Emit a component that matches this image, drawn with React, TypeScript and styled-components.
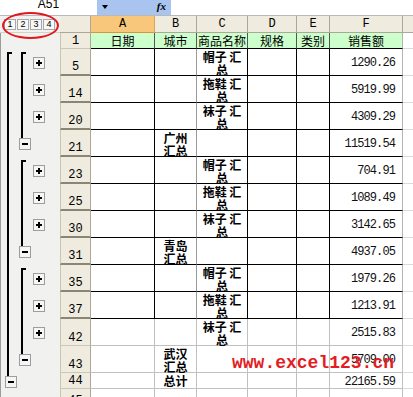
import React from 'react';
import styled, {createGlobalStyle, css} from 'styled-components';

const GlobalStyle = createGlobalStyle`
  html, body {
    margin: 0;
    padding: 0;
    background: #fff;
    overflow: hidden;
  }
  body {
    font-family: "Noto Sans CJK SC", "Liberation Sans", sans-serif;
  }
`

const HEAD_BG = '#efebde'
const HEAD_LINE = '#aca899'
const PANE_BG = '#f1f1ef'

const COLS = [
    {key: 'A', w: 64},
    {key: 'B', w: 42},
    {key: 'C', w: 51},
    {key: 'D', w: 49},
    {key: 'E', w: 33},
    {key: 'F', w: 73},
]

// colour of the right border of each column inside the bordered range
const RIGHT_LINES = ['#000', '#9a9a9a', '#000', '#000', '#000', '#b4b4b4']

const Frame = styled.div`
  position: relative;
  width: 413px;
  height: 397px;
  overflow: hidden;
  background: #fff;
`

const TopBar = styled.div`
  display: flex;
  height: 16px;
  box-sizing: border-box;
  border-bottom: 1px solid #b9b9b9;
`

const NameBox = styled.div`
  width: 97px;
  height: 15px;
  overflow: hidden;
  text-align: center;
  font-family: "Liberation Sans", Arial, sans-serif;
  font-size: 12px;
  line-height: 12px;
  color: #000;

  span {
    display: block;
    margin-top: -2px;
  }
`

const BlueArea = styled.div`
  width: 74px;
  height: 15px;
  background: #a9c4ee;
  display: flex;
  align-items: center;
  justify-content: space-between;
  padding: 0 5px 0 5px;
  box-sizing: border-box;
`

const DropArrow = styled.div`
  width: 0;
  height: 0;
  border-left: 3px solid transparent;
  border-right: 3px solid transparent;
  border-top: 4px solid #000;
  margin-top: -2px;
`

const Fx = styled.div`
  font-family: "Liberation Serif", serif;
  font-style: italic;
  font-weight: bold;
  font-size: 11px;
  line-height: 11px;
  color: #000;
  margin-top: -3px;
`

const Row = styled.div<{ $h: number }>`
  display: flex;
  height: ${p => p.$h}px;
`

const Pane = styled.div`
  width: 60px;
  flex: none;
  box-sizing: border-box;
  background: ${PANE_BG};
  border-left: 1px solid #9b9b9b;
  padding-left: 2px;
  display: flex;
`

const LevelPane = styled(Pane)`
  border-left: none;
  padding-left: 4px;
  align-items: center;
  gap: 1px;
  border-bottom: 1px solid #d4d2c8;
`

const LevelBtn = styled.div`
  width: 12px;
  height: 11px;
  box-sizing: border-box;
  border: 1px solid #a9a9a9;
  background: #f8f8f8;
  font-family: "Liberation Sans", Arial, sans-serif;
  font-size: 9px;
  line-height: 9px;
  text-align: center;
  color: #000;
`

type SlotKind = 'none' | 'start' | 'mid' | 'end' | 'plus'

const Slot = styled.div<{ $kind: SlotKind }>`
  position: relative;
  width: 14px;
  flex: none;
  display: flex;
  align-items: center;

  ${p => (p.$kind === 'start' || p.$kind === 'mid' || p.$kind === 'end') && css`
    &::before {
      content: "";
      position: absolute;
      left: 4px;
      width: 2px;
      background: #000;
      top: ${p.$kind === 'start' ? '3px' : '0'};
      bottom: ${p.$kind === 'end' ? '50%' : '0'};
    }
  `}

  ${p => p.$kind === 'start' && css`
    &::after {
      content: "";
      position: absolute;
      left: 4px;
      top: 3px;
      width: 5px;
      height: 2px;
      background: #000;
    }
  `}
`

const OutlineBtn = styled.div<{ $plus?: boolean }>`
  position: relative;
  z-index: 1;
  width: 12px;
  height: 12px;
  margin-left: 2px;
  margin-top: 1px;
  box-sizing: border-box;
  border: 1px solid #9d9d9d;
  background: #f6f6f6;

  &::before {
    content: "";
    position: absolute;
    left: 2px;
    top: 4px;
    width: 6px;
    height: 2px;
    background: #000;
  }

  ${p => p.$plus && css`
    &::after {
      content: "";
      position: absolute;
      left: 4px;
      top: 2px;
      width: 2px;
      height: 6px;
      background: #000;
    }
  `}
`

const Corner = styled.div`
  width: 31px;
  flex: none;
  box-sizing: border-box;
  background: ${HEAD_BG};
  border-right: 1px solid ${HEAD_LINE};
  border-bottom: 1px solid ${HEAD_LINE};
`

const ColHead = styled.div<{ $w: number; $active?: boolean }>`
  width: ${p => p.$w}px;
  flex: none;
  box-sizing: border-box;
  background: ${p => p.$active ? '#f9c77b' : HEAD_BG};
  border-right: 1px solid ${p => p.$active ? '#d9a55a' : HEAD_LINE};
  border-bottom: 1px solid ${p => p.$active ? '#d9953c' : HEAD_LINE};
  display: flex;
  align-items: center;
  justify-content: center;
  font-family: "Liberation Mono", "Courier New", monospace;
  font-size: 12px;
  color: #000;
`

const HeadFill = styled.div`
  flex: 1;
  background: ${HEAD_BG};
  border-bottom: 1px solid ${HEAD_LINE};
`

const RowHead = styled.div<{ $thick?: boolean; $first?: boolean }>`
  width: 31px;
  flex: none;
  box-sizing: border-box;
  background: ${HEAD_BG};
  border-left: 1px solid #c9c6b6;
  border-right: 1px solid ${HEAD_LINE};
  border-bottom: ${p => p.$thick ? '2px solid #8a8676' : '1px solid #cbc7b7'};
  display: flex;
  align-items: ${p => p.$first ? 'center' : 'flex-end'};
  justify-content: center;
  padding-bottom: ${p => p.$first ? '0' : '1px'};
  font-family: "Liberation Mono", "Courier New", monospace;
  font-size: 12px;
  line-height: 12px;
  color: #000;
`

const Cell = styled.div<{ $w: number; $right: string; $bottom: string; $bg?: string; $kind: 'label' | 'wrap' | 'num' | 'plain'; $bold?: boolean }>`
  width: ${p => p.$w}px;
  flex: none;
  box-sizing: border-box;
  overflow: hidden;
  background: ${p => p.$bg || '#fff'};
  border-right: 1px solid ${p => p.$right};
  border-bottom: 1px solid ${p => p.$bottom};
  color: #000;
  display: flex;
  font-weight: ${p => p.$bold ? 'bold' : 'normal'};
  ${p => p.$kind === 'label' && css`
    align-items: center;
    justify-content: center;
    font-size: 12px;
  `}
  ${p => p.$kind === 'wrap' && css`
    overflow: visible;
    flex-direction: column;
    align-items: center;
    padding-top: 1px;
    font-size: 12px;
    line-height: 13px;
    font-weight: bold;
    text-align: center;
    white-space: nowrap;
  `}
  ${p => p.$kind === 'num' && css`
    align-items: center;
    justify-content: flex-end;
    padding: 2px 7px 0 0;
    font-family: "Liberation Mono", "Courier New", monospace;
    font-size: 12px;
    letter-spacing: -0.9px;
    color: #111;
  `}
`

const Filler = styled.div<{ $bottom: string }>`
  flex: 1;
  border-bottom: 1px solid ${p => p.$bottom};
`

const Ellipse = styled.div`
  position: absolute;
  left: 2px;
  top: 12px;
  width: 57px;
  height: 27px;
  box-sizing: border-box;
  border: 2.5px solid #e3161d;
  border-radius: 50%;
  pointer-events: none;
`

const Watermark = styled.div`
  position: absolute;
  left: 232px;
  top: 354px;
  font-family: "Liberation Mono", "Courier New", monospace;
  font-weight: bold;
  font-size: 18px;
  line-height: 18px;
  color: #e41d25;
  white-space: nowrap;
`

type DataRow = {
    n: number
    h: number
    thick?: boolean
    boxed: boolean
    b?: string
    c?: string
    f?: string
    out: SlotKind[]
}

const DATA: DataRow[] = [
    {n: 5, h: 27, thick: true, boxed: true, c: '帽子 汇\n总', f: '1290.26', out: ['start', 'start', 'plus']},
    {n: 14, h: 27, thick: true, boxed: true, c: '拖鞋 汇\n总', f: '5919.99', out: ['mid', 'mid', 'plus']},
    {n: 20, h: 27, thick: true, boxed: true, c: '袜子 汇\n总', f: '4309.29', out: ['mid', 'mid', 'plus']},
    {n: 21, h: 27, thick: true, boxed: true, b: '广州\n汇总', f: '11519.54', out: ['mid', 'end']},
    {n: 23, h: 27, thick: true, boxed: true, c: '帽子 汇\n总', f: '704.91', out: ['mid', 'start', 'plus']},
    {n: 25, h: 27, thick: true, boxed: true, c: '拖鞋 汇\n总', f: '1089.49', out: ['mid', 'mid', 'plus']},
    {n: 30, h: 27, thick: true, boxed: true, c: '袜子 汇\n总', f: '3142.65', out: ['mid', 'mid', 'plus']},
    {n: 31, h: 27, thick: true, boxed: true, b: '青岛\n汇总', f: '4937.05', out: ['mid', 'end']},
    {n: 35, h: 27, thick: true, boxed: true, c: '帽子 汇\n总', f: '1979.26', out: ['mid', 'start', 'plus']},
    {n: 37, h: 27, thick: true, boxed: true, c: '拖鞋 汇\n总', f: '1213.91', out: ['mid', 'mid', 'plus']},
    {n: 42, h: 27, boxed: false, c: '袜子 汇\n总', f: '2515.83', out: ['mid', 'mid', 'plus']},
    {n: 43, h: 27, boxed: false, b: '武汉\n汇总', f: '5709.00', out: ['mid', 'end']},
    {n: 44, h: 16, boxed: false, b: '总计', f: '22165.59', out: ['end']},
    {n: 45, h: 20, boxed: false, out: []},
]

const HEADERS = ['日期', '城市', '商品名称', '规格', '类别', '销售额']

function Lines({text}: { text: string }) {
    return (
        <>
            {text.split('\n').map((line, i) => <span key={i}>{line}</span>)}
        </>
    )
}

function OutlineCell({out}: { out: SlotKind[] }) {
    return (
        <Pane>
            {out.map((kind, i) => (
                <Slot key={i} $kind={kind}>
                    {kind === 'plus' && <OutlineBtn $plus/>}
                    {kind === 'end' && <OutlineBtn/>}
                </Slot>
            ))}
        </Pane>
    )
}

function App() {
    return (
        <Frame>
            <GlobalStyle/>
            <TopBar>
                <NameBox><span>A51</span></NameBox>
                <BlueArea>
                    <DropArrow/>
                    <Fx>fx</Fx>
                </BlueArea>
            </TopBar>

            <Row $h={17}>
                <LevelPane>
                    {[1, 2, 3, 4].map(l => <LevelBtn key={l}>{l}</LevelBtn>)}
                </LevelPane>
                <Corner/>
                {COLS.map(col => (
                    <ColHead key={col.key} $w={col.w} $active={col.key === 'A'}>{col.key}</ColHead>
                ))}
                <HeadFill/>
            </Row>

            <Row $h={16}>
                <OutlineCell out={[]}/>
                <RowHead $first>1</RowHead>
                {COLS.map((col, i) => (
                    <Cell key={col.key} $w={col.w} $kind="label" $bg="#ccffcc"
                          $right={i === 5 ? '#b4b4b4' : '#555'} $bottom="#000">
                        {HEADERS[i]}
                    </Cell>
                ))}
                <Filler $bottom="#dadada"/>
            </Row>

            {DATA.map(row => {
                const bottom = row.boxed ? '#000' : '#c0c0c0'
                return (
                    <Row key={row.n} $h={row.h}>
                        <OutlineCell out={row.out}/>
                        <RowHead $thick={row.thick}>{row.n}</RowHead>
                        {COLS.map((col, i) => {
                            const right = row.boxed ? RIGHT_LINES[i] : '#c0c0c0'
                            if (col.key === 'B' && row.b) {
                                const wraps = row.b.includes('\n')
                                return (
                                    <Cell key={col.key} $w={col.w} $kind={wraps ? 'wrap' : 'label'} $bold
                                          $right={right} $bottom={bottom}>
                                        <Lines text={row.b}/>
                                    </Cell>
                                )
                            }
                            if (col.key === 'C' && row.c) {
                                return (
                                    <Cell key={col.key} $w={col.w} $kind="wrap" $right={right} $bottom={bottom}>
                                        <Lines text={row.c}/>
                                    </Cell>
                                )
                            }
                            if (col.key === 'F' && row.f) {
                                return (
                                    <Cell key={col.key} $w={col.w} $kind="num" $right={right} $bottom={bottom}>
                                        {row.f}
                                    </Cell>
                                )
                            }
                            return <Cell key={col.key} $w={col.w} $kind="plain" $right={right} $bottom={bottom}/>
                        })}
                        <Filler $bottom="#dadada"/>
                    </Row>
                )
            })}

            <Ellipse/>
            <Watermark>www.excel123.cn</Watermark>
        </Frame>
    );
}

export default App;
